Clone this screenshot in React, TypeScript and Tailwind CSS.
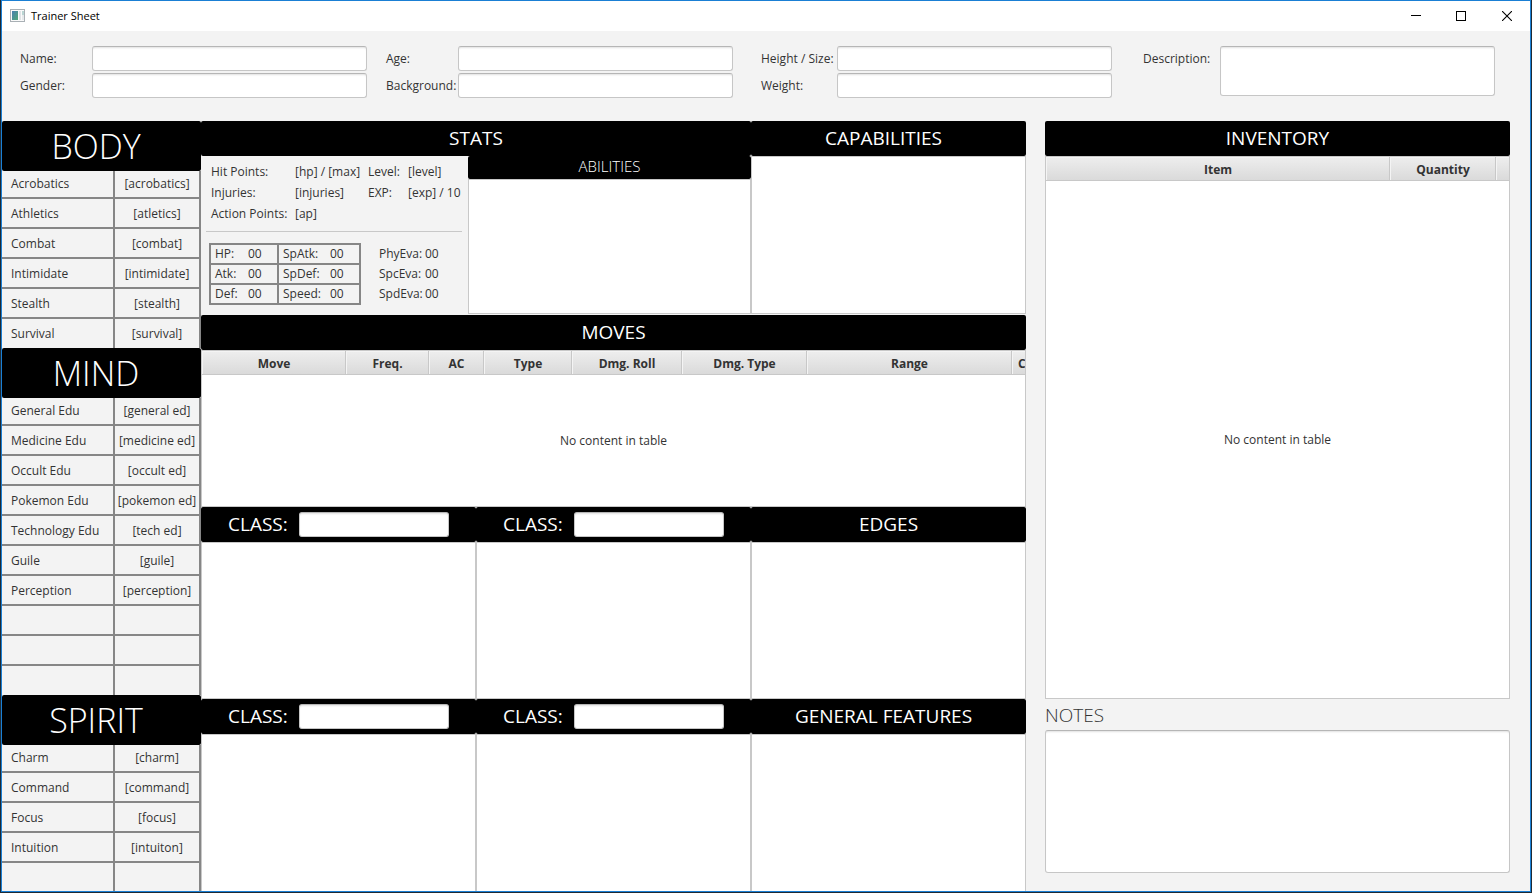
import { useId, type ReactNode } from "react";

const fieldClass =
  "block rounded-[3px] border border-[#c6c6c6] border-t-[#b6b6b6] bg-white px-2 text-[12px] text-[#333] outline-none shadow-[inset_0_2px_2px_-1px_rgba(0,0,0,0.12)] focus:border-[#039ed3]";

type Skill = [string, string];

const bodySkills: Skill[] = [
  ["Acrobatics", "[acrobatics]"],
  ["Athletics", "[atletics]"],
  ["Combat", "[combat]"],
  ["Intimidate", "[intimidate]"],
  ["Stealth", "[stealth]"],
  ["Survival", "[survival]"],
];

const mindSkills: Skill[] = [
  ["General Edu", "[general ed]"],
  ["Medicine Edu", "[medicine ed]"],
  ["Occult Edu", "[occult ed]"],
  ["Pokemon Edu", "[pokemon ed]"],
  ["Technology Edu", "[tech ed]"],
  ["Guile", "[guile]"],
  ["Perception", "[perception]"],
  ["", ""],
  ["", ""],
  ["", ""],
];

const spiritSkills: Skill[] = [
  ["Charm", "[charm]"],
  ["Command", "[command]"],
  ["Focus", "[focus]"],
  ["Intuition", "[intuiton]"],
  ["", ""],
];

function TitleBar() {
  return (
    <header className="flex h-[30px] items-center bg-white pl-2">
      <svg width="16" height="16" viewBox="0 0 16 16" className="shrink-0" aria-hidden="true">
        <defs>
          <linearGradient id="pane" x1="0" y1="0" x2="1" y2="1">
            <stop offset="0" stopColor="#4a7fb0" />
            <stop offset="1" stopColor="#4fa777" />
          </linearGradient>
        </defs>
        <rect x="0.5" y="1.5" width="14" height="12" fill="#fafafa" stroke="#a9b0b5" />
        <rect x="2" y="3" width="6" height="9" fill="url(#pane)" />
        <rect x="9" y="3" width="2" height="9" fill="#dfe3e6" />
        <rect x="12" y="3" width="2" height="4" fill="#b9d5d3" />
        <rect x="12" y="7" width="2" height="5" fill="#e6e9eb" />
      </svg>
      <h1 className="ml-[5px] flex-1 text-[11px] leading-4 text-black">Trainer Sheet</h1>
      <button type="button" aria-label="Minimize" className="flex h-full w-[44px] items-center justify-center">
        <svg width="10" height="10" viewBox="0 0 10 10" shapeRendering="crispEdges" aria-hidden="true">
          <path d="M0 4.5H10" stroke="#000" />
        </svg>
      </button>
      <button type="button" aria-label="Maximize" className="flex h-full w-[46px] items-center justify-center">
        <svg width="10" height="10" viewBox="0 0 10 10" shapeRendering="crispEdges" aria-hidden="true">
          <rect x="0.5" y="0.5" width="9" height="9" fill="none" stroke="#000" />
        </svg>
      </button>
      <button type="button" aria-label="Close" className="flex h-full w-[46px] items-center justify-center">
        <svg width="10" height="10" viewBox="0 0 10 10" aria-hidden="true">
          <path d="M0 0L10 10M10 0L0 10" stroke="#000" strokeWidth="1.1" />
        </svg>
      </button>
    </header>
  );
}

function FieldPair({ first, second, labelClass }: { first: string; second: string; labelClass: string }) {
  const id = useId();
  return (
    <>
      <div className={labelClass}>
        <label htmlFor={`${id}-a`} className="block h-[25px] leading-[25px]">{first}</label>
        <label htmlFor={`${id}-b`} className="block h-[25px] leading-[25px]">{second}</label>
      </div>
      <div className="flex min-w-0 flex-col gap-[2px]">
        <input id={`${id}-a`} type="text" className={`${fieldClass} h-[25px] w-full`} />
        <input id={`${id}-b`} type="text" className={`${fieldClass} h-[25px] w-full`} />
      </div>
    </>
  );
}

function TrainerForm() {
  return (
    <form className="grid grid-cols-[72px_1fr_91px_1fr_104px_1fr_108px_1fr] items-start pt-[15px] pr-[35px] pb-[23px] pl-[18px] text-[12px]">
      <FieldPair first="Name:" second="Gender:" labelClass="flex flex-col gap-[2px]" />
      <FieldPair first="Age:" second="Background:" labelClass="flex flex-col gap-[2px] pl-[19px]" />
      <FieldPair first="Height / Size:" second="Weight:" labelClass="flex flex-col gap-[2px] pl-[28px]" />
      <label htmlFor="description" className="pl-[31px] leading-[25px]">Description:</label>
      <textarea id="description" className={`${fieldClass} h-[50px] w-full resize-none`} />
    </form>
  );
}

function SkillTable({ title, skills, closing = false }: { title: string; skills: Skill[]; closing?: boolean }) {
  return (
    <section>
      <h2 className="h-[50px] rounded-[2px] bg-black pr-[11px] text-center text-[34px] leading-[50px] font-light text-white">
        {title}
      </h2>
      <table className="w-full table-fixed border-separate border-spacing-0 text-[12px]">
        <colgroup>
          <col className="w-[113px]" />
          <col />
        </colgroup>
        <tbody>
          {skills.map(([name, value], i) => {
            const first = i === 0;
            const last = i === skills.length - 1;
            const height = first || (last && closing) ? "h-[28px]" : last ? "h-[29px]" : "h-[30px]";
            const cell = `border-r-2 border-[#868686] px-0 pb-0 leading-4 whitespace-nowrap ${
              last ? "pt-0" : first ? "border-b-2 pt-0" : "border-b-2 pt-[2px]"
            }`;
            return (
              <tr key={i} className={height}>
                <td className={cell}>
                  <span className="ml-[9px]">{name}</span>
                </td>
                <td className={`${cell} text-center`}>{value}</td>
              </tr>
            );
          })}
        </tbody>
      </table>
    </section>
  );
}

function BarTitle({ children, inset = false }: { children: ReactNode; inset?: boolean }) {
  return (
    <h2
      className={`h-[35px] rounded-[2px] bg-black text-center text-[19px] leading-[35px] text-white ${
        inset ? "pr-[10px]" : ""
      }`}
    >
      {children}
    </h2>
  );
}

function ListBox({ className, label }: { className: string; label: string }) {
  return <ul aria-label={label} className={`border border-[#c8c8c8] bg-white ${className}`} />;
}

function ClassHeader() {
  const id = useId();
  return (
    <div className="flex h-[35px] items-center rounded-[2px] bg-black pl-[27px]">
      <label htmlFor={id} className="w-[71px] text-[19px] leading-[35px] text-white">CLASS:</label>
      <input id={id} type="text" className={`${fieldClass} h-[25px] w-[150px]`} />
    </div>
  );
}

const vitals = [
  ["Hit Points:", "[hp] / [max]", "Level:", "[level]"],
  ["Injuries:", "[injuries]", "EXP:", "[exp] / 10"],
  ["Action Points:", "[ap]", "", ""],
];

const battleStats = [
  ["HP:", "00", "SpAtk:", "00"],
  ["Atk:", "00", "SpDef:", "00"],
  ["Def:", "00", "Speed:", "00"],
];

const evasions = [
  ["PhyEva:", "00"],
  ["SpcEva:", "00"],
  ["SpdEva:", "00"],
];

function StatsPanel() {
  return (
    <section className="flex-[2_1_0] pb-[1px]">
      <BarTitle>STATS</BarTitle>
      <div className="flex">
        <div className="w-[267px] pt-[5px] text-[12px]">
          <div className="grid grid-cols-[84px_73px_40px_1fr] pl-[10px] leading-[21px] whitespace-nowrap">
            {vitals.flat().map((text, i) => (
              <span key={i}>{text}</span>
            ))}
          </div>
          <hr className="mt-[7px] mr-[6px] ml-[5px] border-t border-[#c8c8c8]" />
          <div className="mt-[11px] flex pl-2">
            <table className="w-[152px] table-fixed border-collapse leading-[18px]">
              <colgroup>
                <col className="w-[38px]" />
                <col className="w-[30px]" />
                <col className="w-[52px]" />
                <col />
              </colgroup>
              <tbody>
                {battleStats.map(([a, av, b, bv]) => (
                  <tr key={a} className="h-[20px]">
                    <td className="border-y-2 border-l-2 border-[#868686] p-0 pl-1">{a}</td>
                    <td className="border-y-2 border-[#868686] p-0">{av}</td>
                    <td className="border-y-2 border-l-2 border-[#868686] p-0 pl-1">{b}</td>
                    <td className="border-y-2 border-r-2 border-[#868686] p-0">{bv}</td>
                  </tr>
                ))}
              </tbody>
            </table>
            <dl className="ml-[18px] grid grid-cols-[46px_auto] content-start pt-px leading-[20px]">
              {evasions.map(([name, value]) => (
                <div key={name} className="contents">
                  <dt>{name}</dt>
                  <dd>{value}</dd>
                </div>
              ))}
            </dl>
          </div>
        </div>
        <div className="flex-1">
          <h3 className="h-[23px] rounded-[2px] bg-black text-center text-[15px] leading-[20px] font-light text-white">
            ABILITIES
          </h3>
          <ListBox label="Abilities" className="h-[135px]" />
        </div>
      </div>
    </section>
  );
}

const headCell =
  "h-[24px] overflow-hidden border-r border-b border-[#c8c8c8] bg-linear-to-b from-[#eeeeee] to-[#dadada] pt-[2px] pr-0 pb-0 pl-px text-center font-bold leading-[21px] shadow-[inset_1px_1px_0_#f4f4f4]";

function MovesTable() {
  return (
    <table className="h-[157px] w-full table-fixed border-separate border-spacing-0 border border-[#c8c8c8] bg-white text-[12px]">
      <thead>
        <tr>
          <th className={`${headCell} w-[144px]`}>Move</th>
          <th className={`${headCell} w-[83px]`}>Freq.</th>
          <th className={`${headCell} w-[55px]`}>AC</th>
          <th className={`${headCell} w-[88px]`}>Type</th>
          <th className={`${headCell} w-[110px]`}>Dmg. Roll</th>
          <th className={`${headCell} w-[125px]`}>Dmg. Type</th>
          <th className={headCell}>Range</th>
          <th className={`${headCell} w-[13px] border-r-0`}>
            <div className="w-3 overflow-hidden pl-[5px] text-left">C</div>
          </th>
        </tr>
      </thead>
      <tbody>
        <tr>
          <td colSpan={8} className="p-0 text-center">No content in table</td>
        </tr>
      </tbody>
    </table>
  );
}

function InventoryTable() {
  return (
    <table className="w-full flex-1 table-fixed border-separate border-spacing-0 border border-[#c8c8c8] bg-white text-[12px]">
      <thead>
        <tr>
          <th className={headCell}>Item</th>
          <th className={`${headCell} w-[106px]`}>Quantity</th>
          <th aria-label="Spacer" className={`${headCell} w-[13px] border-r-0`} />
        </tr>
      </thead>
      <tbody>
        <tr>
          <td colSpan={3} className="h-[516px] p-0 text-center">No content in table</td>
        </tr>
      </tbody>
    </table>
  );
}

export default function App() {
  return (
    <div className="min-h-screen bg-[#1d2a35] px-px pb-px font-['Open_Sans','Noto_Sans',sans-serif] text-[#333]">
      <div className="border border-[#1a7fd4] bg-[#f3f3f3]">
        <TitleBar />
        <TrainerForm />
        <main className="flex pr-5">
          <div className="w-[199px] shrink-0">
            <SkillTable title="BODY" skills={bodySkills} />
            <SkillTable title="MIND" skills={mindSkills} />
            <SkillTable title="SPIRIT" skills={spiritSkills} closing />
          </div>
          <div className="flex-[825_1_0]">
            <div className="flex">
              <StatsPanel />
              <section className="flex-1">
                <BarTitle inset>CAPABILITIES</BarTitle>
                <ListBox label="Capabilities" className="h-[158px]" />
              </section>
            </div>
            <section>
              <BarTitle>MOVES</BarTitle>
              <MovesTable />
            </section>
            <div className="grid grid-cols-3">
              <section>
                <ClassHeader />
                <ListBox label="Class features" className="h-[157px]" />
              </section>
              <section>
                <ClassHeader />
                <ListBox label="Class features" className="h-[157px]" />
              </section>
              <section>
                <BarTitle>EDGES</BarTitle>
                <ListBox label="Edges" className="h-[157px]" />
              </section>
              <section>
                <ClassHeader />
                <ListBox label="Class features" className="h-[157px] border-b-0" />
              </section>
              <section>
                <ClassHeader />
                <ListBox label="Class features" className="h-[157px] border-b-0" />
              </section>
              <section>
                <BarTitle inset>GENERAL FEATURES</BarTitle>
                <ListBox label="General features" className="h-[157px] border-b-0" />
              </section>
            </div>
          </div>
          <div className="ml-[19px] flex flex-[465_1_0] flex-col">
            <BarTitle>INVENTORY</BarTitle>
            <InventoryTable />
            <label htmlFor="notes" className="h-[31px] text-[19px] leading-[32px] font-light">NOTES</label>
            <textarea id="notes" className={`${fieldClass} mb-[18px] h-[143px] w-full resize-none`} />
          </div>
        </main>
      </div>
    </div>
  );
}
